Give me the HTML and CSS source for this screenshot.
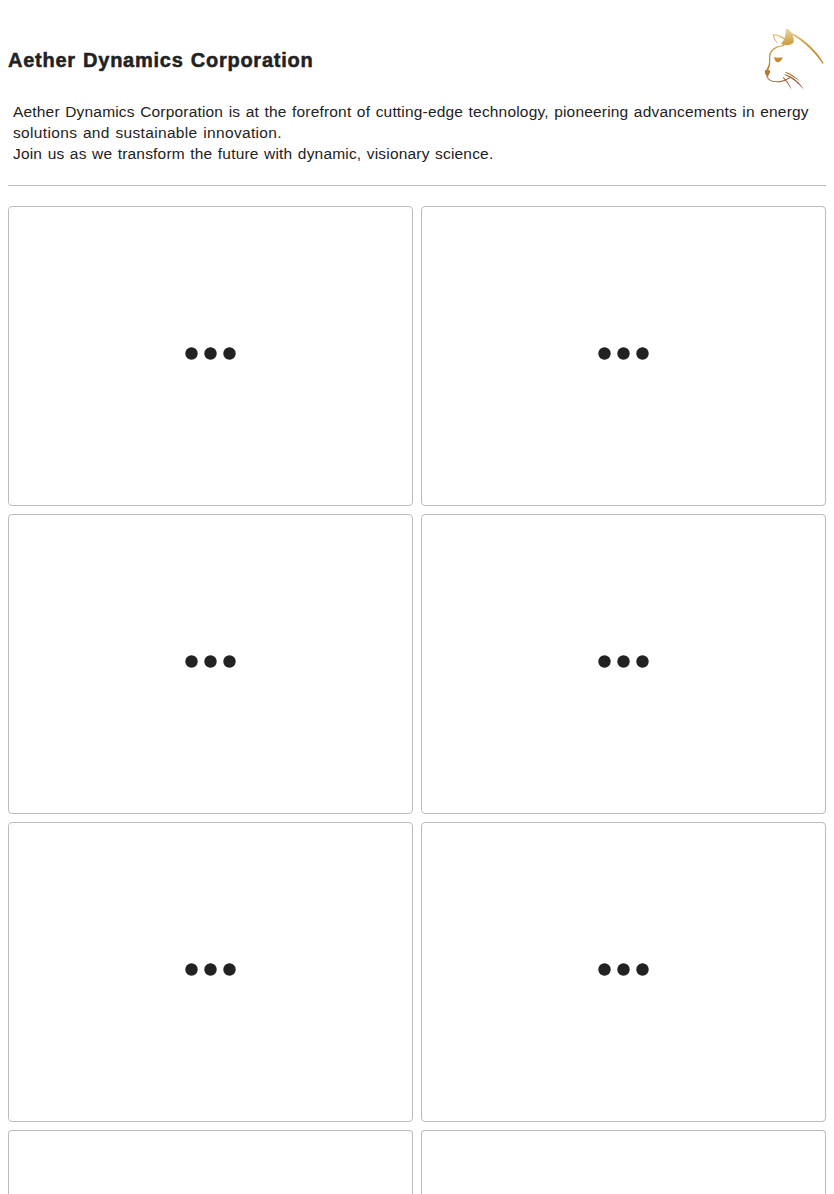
FILE: index.html
```html
<!DOCTYPE html>
<html lang="en">
<head>
<meta charset="utf-8">
<title>Aether Dynamics Corporation</title>
<link rel="stylesheet" href="styles.css">
</head>
<body>
<svg class="symbols" width="0" height="0" aria-hidden="true">
  <symbol id="dots" viewBox="0 0 51 13">
    <circle cx="6.5" cy="6.5" r="6.2"/><circle cx="25.5" cy="6.5" r="6.2"/><circle cx="44.5" cy="6.5" r="6.2"/>
  </symbol>
</svg>
<header class="header">
  <h1 class="title">Aether Dynamics Corporation</h1>
  <svg class="logo" viewBox="24 24 192 192" aria-hidden="true">
    <defs>
      <linearGradient id="gold" gradientUnits="userSpaceOnUse" x1="100" y1="26" x2="120" y2="208">
        <stop offset="0" stop-color="#ead9a4"/>
        <stop offset="0.22" stop-color="#d1a54c"/>
        <stop offset="0.5" stop-color="#c48b2c"/>
        <stop offset="0.72" stop-color="#ad7634"/>
        <stop offset="1" stop-color="#8a4b34"/>
      </linearGradient>
    </defs>
    <g fill="url(#gold)">
      <path d="M95 29C100 25 106 28 109 34C118 47 121 57 119 67C113 75 101 77 89 75L81 71C90 62 95 49 95 29Z"/>
      <path d="M72 73C62 63 56 53 56 42C69 42 83 48 93 55L91 59C80 52 71 47 61 46C61 55 67 63 72 73Z"/>
      <path d="M108 36C151 56 190 94 209 130L206 131C182 95 147 63 110 41Z"/>
      <path d="M90 75C66 77 46 89 45 108C45 124 47 136 37 148L42 151C51 137 48 124 49 109C51 91 69 80 90 78Z"/>
      <path d="M60 111C68 114 77 113 86 112C84 120 79 127 72 127C65 127 62 121 60 111Z"/>
      <path d="M33 151C38 149 44 149 49 152C48 161 43 163 42 171C35 167 31 158 33 151Z"/>
      <path d="M39 167C45 183 65 187 82 182C94 180 100 175 108 171L110 174C101 178 95 183 84 185C64 190 42 185 37 169Z"/>
      <path d="M94 155C113 161 128 172 139 185C124 174 110 164 94 158Z"/>
      <path d="M92 162C119 170 137 188 150 209C134 192 118 176 92 165Z"/>
      <path d="M88 171C100 181 107 194 113 209C104 196 98 184 86 173Z"/>
    </g>
  </svg>
</header>
<p class="intro">Aether Dynamics Corporation is at the forefront of cutting-edge technology, pioneering advancements in energy<br><span class="line-two">solutions and sustainable innovation.</span><br>Join us as we transform the future with dynamic, visionary science.</p>
<main class="grid">
  <section class="card"><svg class="dots"><use href="#dots"/></svg></section>
  <section class="card"><svg class="dots"><use href="#dots"/></svg></section>
  <section class="card"><svg class="dots"><use href="#dots"/></svg></section>
  <section class="card"><svg class="dots"><use href="#dots"/></svg></section>
  <section class="card"><svg class="dots"><use href="#dots"/></svg></section>
  <section class="card"><svg class="dots"><use href="#dots"/></svg></section>
  <section class="card"></section>
  <section class="card"></section>
</main>
</body>
</html>
```
FILE: styles.css
```css
* { box-sizing: border-box; }
html { height: 100%; overflow: hidden; }
body {
  height: 100%;
  margin: 0;
  padding: 28px 8px 0;
  overflow: hidden;
  background: #fff;
  color: #222;
  font-family: "Liberation Sans", Arial, sans-serif;
}
.symbols { display: block; }
.header {
  display: flex;
  align-items: center;
  justify-content: space-between;
  height: 64px;
}
.title {
  margin: 0;
  font-size: 20px;
  line-height: 24px;
  letter-spacing: 0.74px;
  word-spacing: 1px;
  white-space: nowrap;
  -webkit-text-stroke: 0.5px #222;
}
.logo { width: 64px; height: 64px; }
.intro {
  height: 94px;
  margin: 0 0 20px;
  padding: 9px 0 0 5px;
  border-bottom: 1px solid #bbb;
  font-size: 15.5px;
  line-height: 21px;
  letter-spacing: 0.18px;
  word-spacing: 1px;
  white-space: nowrap;
}
.line-two { letter-spacing: 0.34px; }
.grid {
  display: grid;
  grid-template-columns: 1fr 1fr;
  grid-template-rows: repeat(3, 300px) 64px;
  gap: 8px;
}
.card {
  display: flex;
  align-items: center;
  justify-content: center;
  padding-bottom: 5px;
  border: 1px solid #bbb;
  border-radius: 4px;
}
.card:nth-child(n + 7) {
  border-bottom: 0;
  border-radius: 4px 4px 0 0;
}
.dots {
  width: 51px;
  height: 13px;
  fill: #222;
}
```
